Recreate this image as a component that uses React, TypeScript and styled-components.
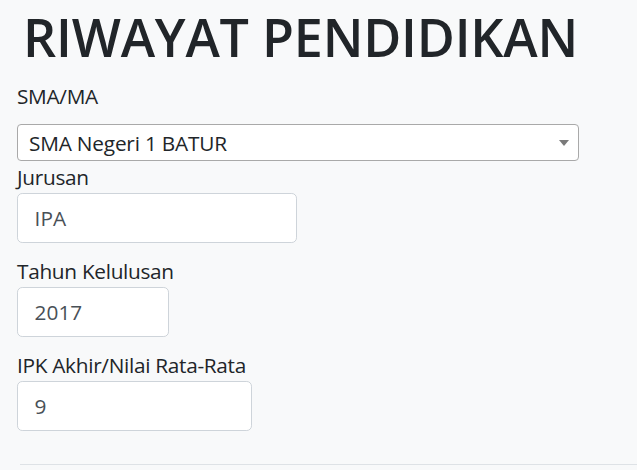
import React from 'react';
import styled, { createGlobalStyle } from 'styled-components';

const GlobalStyle = createGlobalStyle`
  html, body {
    margin: 0;
    padding: 0;
    background: #f8f9fa;
  }
  body {
    font-family: "Open Sans", "Noto Sans", sans-serif;
    color: #212529;
  }
`;

interface Field {
  label: string;
  value: string;
  width: number;
}

const fields: Field[] = [
  { label: 'Jurusan', value: 'IPA', width: 280 },
  { label: 'Tahun Kelulusan', value: '2017', width: 152 },
  { label: 'IPK Akhir/Nilai Rata-Rata', value: '9', width: 235 },
];

const App: React.FC = () => {
  return (
    <>
      <GlobalStyle />
      <Page>
        <Title>RIWAYAT PENDIDIKAN</Title>
        <Form>
          <Label $gap={11}>SMA/MA</Label>
          <SelectWrap>
            <Select defaultValue="batur">
              <option value="batur">SMA Negeri 1 BATUR</option>
            </Select>
            <Caret width="10" height="6" viewBox="0 0 10 6">
              <path d="M0 0h10L5 6z" fill="#7a7a7a" />
            </Caret>
          </SelectWrap>
          {fields.map((f) => (
            <Group key={f.label}>
              <Label $gap={0}>{f.label}</Label>
              <Input defaultValue={f.value} $width={f.width} />
            </Group>
          ))}
        </Form>
        <Divider />
      </Page>
    </>
  );
};

const Page = styled.div`
  padding: 6px 0 0 17px;
  height: 470px;
  box-sizing: border-box;
  overflow: hidden;
`;

const Title = styled.h1`
  margin: 0 0 13px 6px;
  font-size: 52px;
  line-height: 62.4px;
  font-weight: 600;
  letter-spacing: -0.2px;
  color: #212529;
`;

const Form = styled.div`
  display: flex;
  flex-direction: column;
  align-items: flex-start;
`;

const Label = styled.label<{ $gap: number }>`
  display: block;
  font-size: 20.8px;
  line-height: 31.2px;
  letter-spacing: -0.3px;
  margin-bottom: ${(p) => p.$gap}px;
`;

const SelectWrap = styled.div`
  position: relative;
  width: 562px;
  margin-bottom: 1px;
`;

const Select = styled.select`
  appearance: none;
  width: 100%;
  height: 37px;
  box-sizing: border-box;
  border: 1px solid #a9a9a9;
  border-radius: 4px;
  background: #fff;
  padding: 2px 30px 0 11px;
  font-family: inherit;
  font-size: 20.8px;
  letter-spacing: -0.2px;
  color: #212529;
  outline: none;
`;

const Caret = styled.svg`
  position: absolute;
  right: 10px;
  top: 16px;
  pointer-events: none;
`;

const Group = styled.div`
  display: flex;
  flex-direction: column;
  align-items: flex-start;
  & + & {
    margin-top: 13px;
  }
`;

const Input = styled.input<{ $width: number }>`
  width: ${(p) => p.$width}px;
  height: 50px;
  box-sizing: border-box;
  padding: 7.8px 15.6px 7.8px 16.6px;
  border: 1.3px solid #ced4da;
  border-radius: 5.2px;
  background: #fff;
  font-family: inherit;
  font-size: 20.8px;
  color: #495057;
  outline: none;
`;

const Divider = styled.hr`
  margin: 33px 0 0 3px;
  border: 0;
  border-top: 1px solid #dee2e6;
`;

export default App;
